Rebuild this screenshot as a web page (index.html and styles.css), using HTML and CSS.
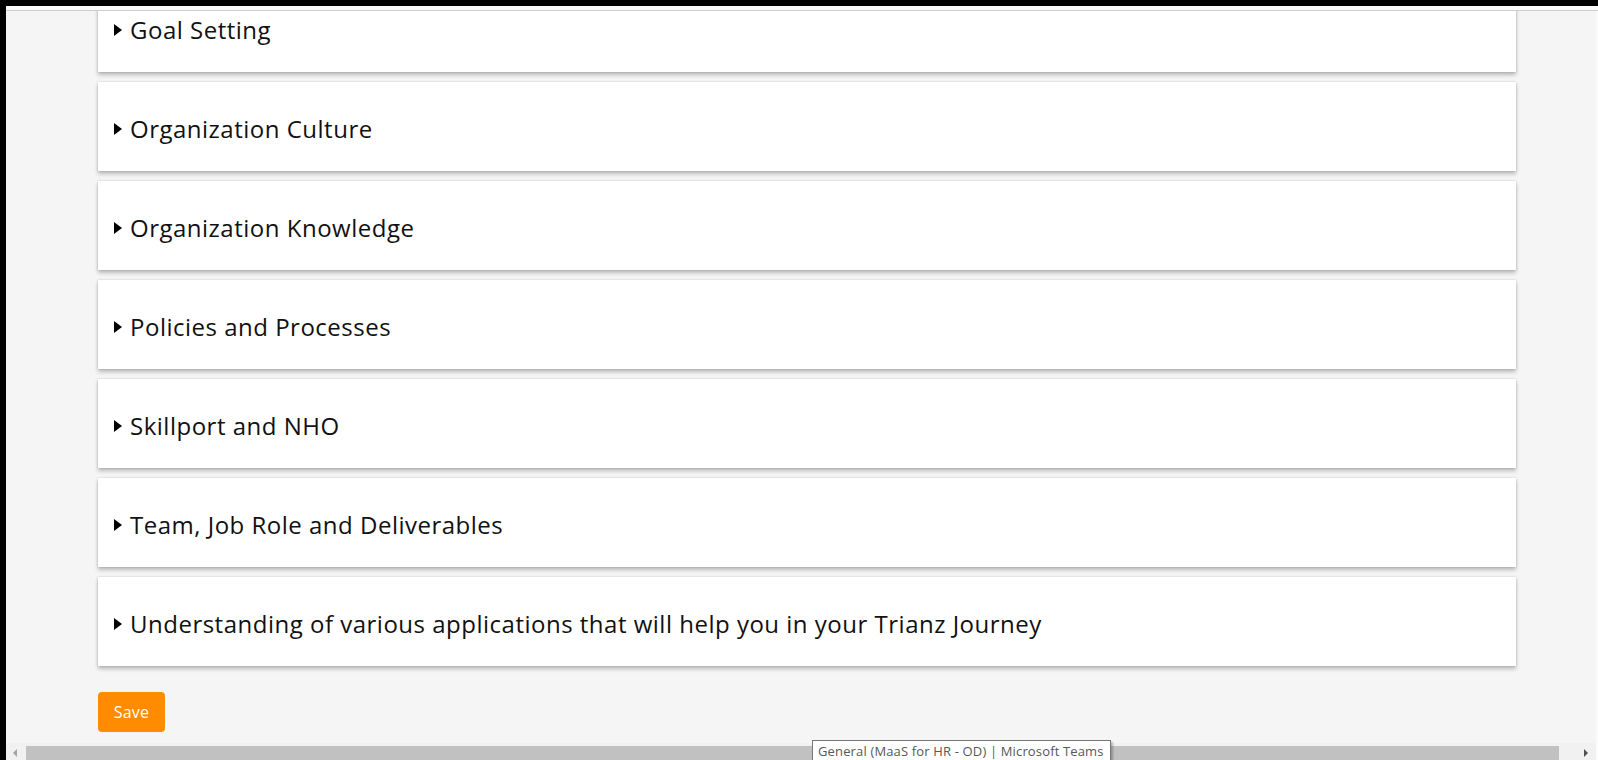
FILE: index.html
```html
<!DOCTYPE html>
<html lang="en">
<head>
<meta charset="utf-8">
<title>General (MaaS for HR - OD) | Microsoft Teams</title>
<link rel="stylesheet" href="styles.css">
</head>
<body>
<div class="frame">
  <div class="viewport">
    <div class="topstrip"></div>
    <div class="scroll">
      <div class="content">
        <div class="sections">
          <div class="card"><span class="caret"></span><span class="title">Goal Setting</span></div>
          <div class="card"><span class="caret"></span><span class="title">Organization Culture</span></div>
          <div class="card"><span class="caret"></span><span class="title">Organization Knowledge</span></div>
          <div class="card"><span class="caret"></span><span class="title">Policies and Processes</span></div>
          <div class="card"><span class="caret"></span><span class="title">Skillport and NHO</span></div>
          <div class="card"><span class="caret"></span><span class="title">Team, Job Role and Deliverables</span></div>
          <div class="card"><span class="caret"></span><span class="title">Understanding of various applications that will help you in your Trianz Journey</span></div>
        </div>
        <button class="save" type="button">Save</button>
      </div>
    </div>
    <div class="hscroll">
      <div class="sbtn sbtn-left"><span class="arrow-left"></span></div>
      <div class="track"><div class="thumb"></div></div>
      <div class="sbtn sbtn-right"><span class="arrow-right"></span></div>
      <div class="edge"></div>
    </div>
  </div>
  <div class="tooltip">General (MaaS for HR - OD) | Microsoft Teams</div>
</div>
</body>
</html>
```

FILE: styles.css
```css
html, body {
  margin: 0;
  padding: 0;
  height: 100%;
  overflow: hidden;
}

body {
  background: #000;
  font-family: "Open Sans", "Noto Sans", sans-serif;
}

.frame {
  position: relative;
  width: 1598px;
  height: 760px;
  box-sizing: border-box;
  padding: 6px 0 0 6px;
  background: #000;
  display: flex;
  flex-direction: column;
}

.viewport {
  flex: 1;
  display: flex;
  flex-direction: column;
  background: #fff;
  min-height: 0;
}

.topstrip {
  height: 4px;
  background: #fbfbfb;
  border-bottom: 1px solid #cdcdcd;
}

.scroll {
  flex: 1;
  min-height: 0;
  overflow: hidden;
  background: #f5f5f5;
  border-right: 2px solid #fbfbfb;
}

.content {
  margin-top: -28px;
  padding: 0 80px 0 92px;
}

.sections {
  display: flex;
  flex-direction: column;
  gap: 10px;
}

.card {
  height: 89px;
  box-sizing: border-box;
  padding: 33px 17px 0 16px;
  background: #fff;
  box-shadow: 0 3px 4px rgba(0, 0, 0, 0.24), 0 0 2px rgba(0, 0, 0, 0.18);
  display: flex;
  align-items: flex-start;
}

.caret {
  flex: none;
  width: 0;
  height: 0;
  margin-top: 8px;
  margin-right: 8px;
  border-left: 8px solid #000;
  border-top: 6px solid transparent;
  border-bottom: 6px solid transparent;
}

.title {
  font-size: 24px;
  line-height: 28px;
  letter-spacing: 0.5px;
  color: #111;
  white-space: nowrap;
}

.save {
  display: block;
  margin-top: 26px;
  width: 67px;
  height: 40px;
  border: 0;
  border-radius: 4px;
  background: #ff8c00;
  color: #fff;
  font-family: "Open Sans", "Noto Sans", sans-serif;
  font-size: 16px;
  letter-spacing: 0.2px;
  padding: 0;
}

.hscroll {
  height: 17px;
  display: flex;
  background: #f1f1f1;
}

.sbtn {
  width: 17px;
  flex: none;
  display: flex;
  align-items: center;
  justify-content: center;
}

.sbtn-right {
  width: 20px;
}

.arrow-left {
  width: 0;
  height: 0;
  border-right: 4px solid #a3a3a3;
  border-top: 4px solid transparent;
  border-bottom: 4px solid transparent;
  margin-top: 2px;
}

.arrow-right {
  width: 0;
  height: 0;
  border-left: 4px solid #505050;
  border-top: 4px solid transparent;
  border-bottom: 4px solid transparent;
  margin-top: 2px;
}

.track {
  flex: 1;
  padding: 3px 17px 0 3px;
}

.thumb {
  height: 14px;
  background: #c1c1c1;
}

.edge {
  width: 2px;
  background: #fbfbfb;
}

.tooltip {
  position: absolute;
  left: 812px;
  top: 740px;
  width: 299px;
  height: 24px;
  box-sizing: border-box;
  padding: 2px 0 0 5px;
  background: #fff;
  border: 1px solid #767676;
  box-shadow: 2px 2px 2px rgba(0, 0, 0, 0.25);
  color: #575757;
  font-family: "Open Sans", "Noto Sans", sans-serif;
  font-size: 13px;
  line-height: 17px;
  letter-spacing: 0.15px;
  white-space: nowrap;
}
```
